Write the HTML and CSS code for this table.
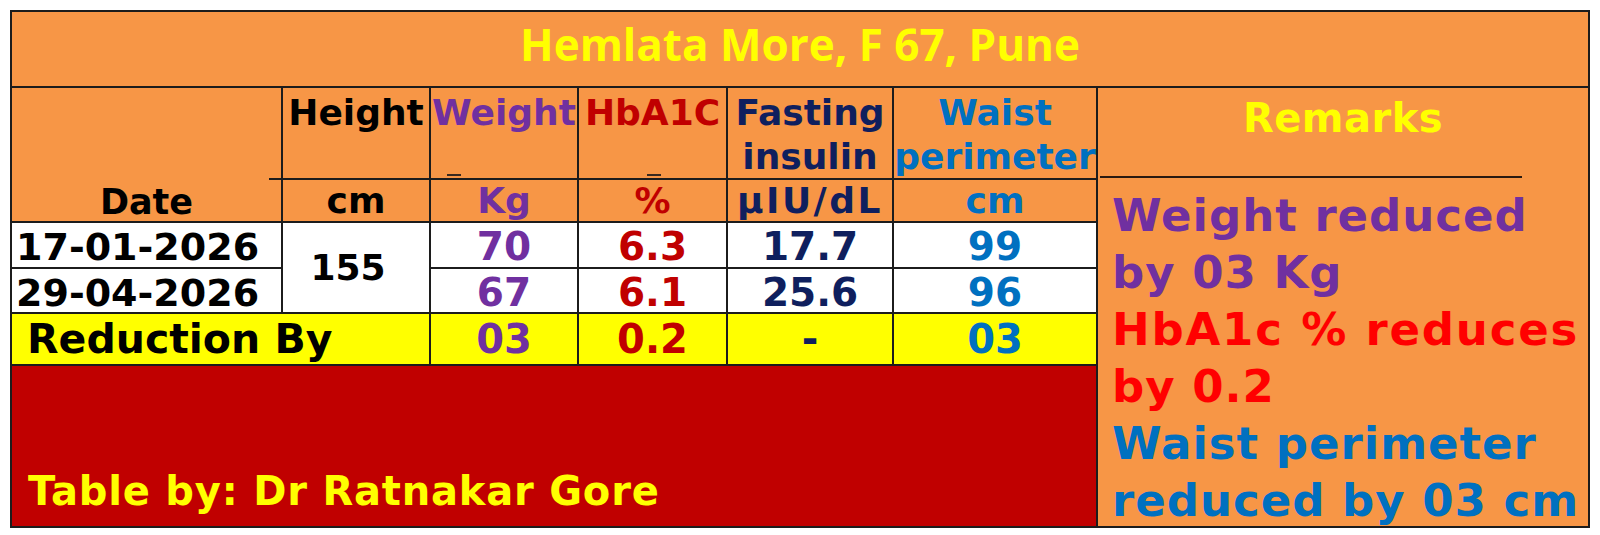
FILE: index.html
```html
<!DOCTYPE html>
<html>
<head>
<meta charset="utf-8">
<title>Hemlata More</title>
<link rel="stylesheet" href="styles.css">
</head>
<body>
<div class="sheet">
  <div class="cell title">Hemlata More, F 67, Pune</div>

  <div class="cell date-head c1 r2s2"><span>Date</span></div>
  <div class="cell hd black c2 r2">Height</div>
  <div class="cell hd purple c3 r2">Weight<i class="tick t-w"></i></div>
  <div class="cell hd maroon c4 r2">HbA1C<i class="tick t-h"></i></div>
  <div class="cell hd navy c5 r2">Fasting<br>insulin</div>
  <div class="cell hd blue c6 r2">Waist<br>perimeter</div>

  <div class="cell remarks">
    <div class="rm-head">Remarks</div>
    <div class="rm-rule"></div>
    <div class="rm-body">
      <div class="purple">Weight reduced</div>
      <div class="purple">by 03 Kg</div>
      <div class="red wider">HbA1c % reduces</div>
      <div class="red">by 0.2</div>
      <div class="blue">Waist perimeter</div>
      <div class="blue">reduced by 03 cm</div>
    </div>
  </div>

  <div class="cell unit black c2 r3">cm</div>
  <div class="cell unit purple c3 r3">Kg</div>
  <div class="cell unit maroon c4 r3">%</div>
  <div class="cell unit navy wide c5 r3">µIU/dL</div>
  <div class="cell unit blue c6 r3">cm</div>

  <div class="cell data date c1 r4">17-01-2026</div>
  <div class="cell data height black c2 r4s2">155</div>
  <div class="cell data purple c3 r4">70</div>
  <div class="cell data maroon c4 r4">6.3</div>
  <div class="cell data navy c5 r4">17.7</div>
  <div class="cell data blue c6 r4">99</div>

  <div class="cell data date c1 r5">29-04-2026</div>
  <div class="cell data purple c3 r5">67</div>
  <div class="cell data maroon c4 r5">6.1</div>
  <div class="cell data navy c5 r5">25.6</div>
  <div class="cell data blue c6 r5">96</div>

  <div class="cell red-row label c1s2 r6">Reduction By</div>
  <div class="cell red-row purple c3 r6">03</div>
  <div class="cell red-row maroon c4 r6">0.2</div>
  <div class="cell red-row navy c5 r6">-</div>
  <div class="cell red-row blue c6 r6">03</div>

  <div class="cell footer">Table by: Dr Ratnakar Gore</div>
</div>
</body>
</html>
```

FILE: styles.css
```css
* {
  box-sizing: border-box;
  margin: 0;
  padding: 0;
}

body {
  background: #ffffff;
  font-family: "DejaVu Sans", Verdana, sans-serif;
  font-weight: bold;
}

.sheet {
  display: grid;
  grid-template-columns: 271px 148px 148px 149px 166px 204px 492px;
  grid-template-rows: 76px 92px 43px 46px 45px 52px 162px;
  width: max-content;
  margin: 10px 0 0 10px;
  border-top: 2px solid #1c1c1c;
  border-left: 2px solid #1c1c1c;
}

.cell {
  position: relative;
  display: flex;
  align-items: center;
  justify-content: center;
  white-space: nowrap;
  background: #f79646;
  border-right: 2px solid #1c1c1c;
  border-bottom: 2px solid #1c1c1c;
}

/* placement */
.c1 { grid-column: 1; }
.c2 { grid-column: 2; }
.c3 { grid-column: 3; }
.c4 { grid-column: 4; }
.c5 { grid-column: 5; }
.c6 { grid-column: 6; }
.c1s2 { grid-column: 1 / span 2; }
.r2 { grid-row: 2; }
.r3 { grid-row: 3; }
.r4 { grid-row: 4; }
.r5 { grid-row: 5; }
.r6 { grid-row: 6; }
.r2s2 { grid-row: 2 / span 2; }
.r4s2 { grid-row: 4 / span 2; }

/* colours */
.black { color: #000000; }
.purple { color: #7030a0; }
.maroon { color: #c00000; }
.navy { color: #0f1f5e; }
.blue { color: #0070c0; }
.red { color: #ff0000; }

/* title */
.title {
  grid-column: 1 / -1;
  grid-row: 1;
  align-items: flex-start;
  padding-top: 2px;
  font-family: "Open Sans", "DejaVu Sans", sans-serif;
  font-weight: 700;
  font-size: 44px;
  line-height: 60px;
  color: #ffff00;
}

/* header */
.date-head {
  align-items: flex-end;
  font-size: 35px;
  line-height: 37px;
  color: #000000;
}

.date-head::after {
  content: "";
  position: absolute;
  top: 90px;
  right: -2px;
  width: 14px;
  height: 2px;
  background: #1c1c1c;
}

.hd {
  align-items: flex-start;
  text-align: center;
  padding-top: 3px;
  font-size: 36px;
  line-height: 44px;
}

.tick {
  position: absolute;
  bottom: 2px;
  width: 14px;
  height: 2px;
  background: #3a2a20;
}

.t-w { left: 16px; }
.t-h { left: 68px; }

.unit {
  font-size: 36px;
  line-height: 41px;
}

.wide {
  letter-spacing: 2.5px;
}

/* data */
.data {
  align-items: flex-start;
  padding-top: 4px;
  background: #ffffff;
  font-size: 39px;
  line-height: 40px;
}

.date {
  justify-content: flex-start;
  padding-left: 4px;
  font-size: 38px;
  color: #000000;
}

.height {
  align-items: center;
  padding-top: 0;
  padding-right: 16px;
  font-size: 36px;
}

.red-row {
  background: #ffff00;
  font-size: 40px;
  line-height: 50px;
}

.label {
  justify-content: flex-start;
  padding-left: 15px;
  font-size: 41px;
  color: #000000;
}

/* remarks */
.remarks {
  grid-column: 7;
  grid-row: 2 / span 6;
  display: block;
}

.rm-head {
  height: 88px;
  padding-top: 7px;
  text-align: center;
  font-size: 40px;
  line-height: 46px;
  letter-spacing: 0.5px;
  color: #ffff00;
}

.rm-rule {
  width: 422px;
  height: 2px;
  margin-left: 2px;
  background: #2a1a10;
}

.rm-body {
  padding-top: 9px;
  padding-left: 14px;
  font-size: 45px;
  line-height: 57px;
  letter-spacing: 1px;
}

.rm-body .wider {
  letter-spacing: 1.8px;
}

/* footer */
.footer {
  grid-column: 1 / span 6;
  grid-row: 7;
  align-items: flex-end;
  justify-content: flex-start;
  padding-left: 16px;
  padding-bottom: 13px;
  background: #c00000;
  font-size: 40px;
  line-height: 44px;
  letter-spacing: 0.8px;
  color: #ffff00;
}
```
